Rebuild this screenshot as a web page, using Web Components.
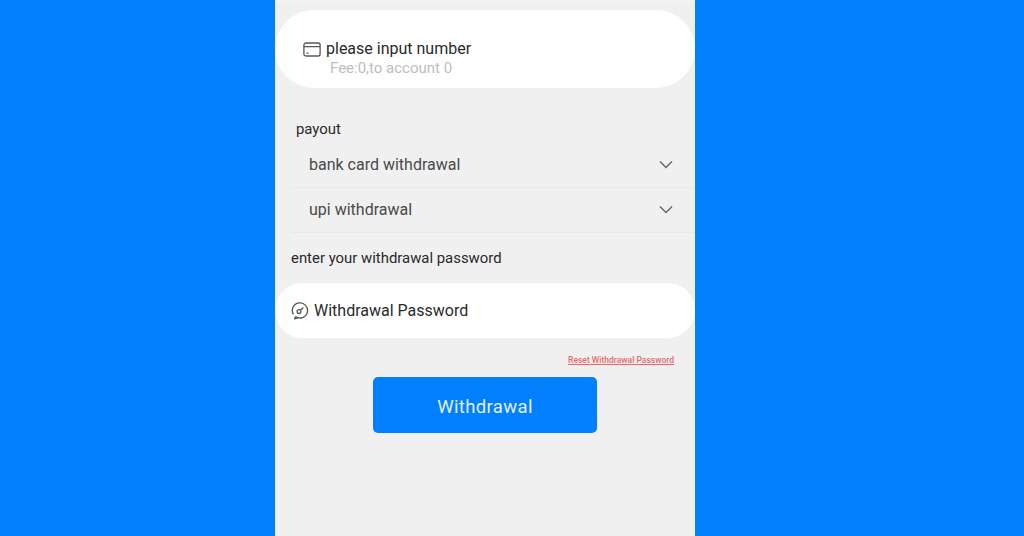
<!DOCTYPE html>
<html>
<head>
<meta charset="utf-8">
<style>
  html, body { margin: 0; padding: 0; height: 100%; }
  body { background: #0281ff; font-family: Roboto, "Liberation Sans", sans-serif; overflow: hidden; }
</style>
</head>
<body>
<withdraw-page>
  <pill-card style="--pill-height:78px;--pill-pad:31px 0 0 28px">
    <svg slot="icon" width="18" height="15" viewBox="0 0 18 15" fill="none" stroke="#555" stroke-width="1.3"><rect x=".9" y="1" width="16.2" height="13" rx="2"/><path d="M1 4.7h16M3.6 11.2h2"/></svg>
    <span>please input number</span>
    <span slot="sub">Fee:0,to account 0</span>
  </pill-card>
  <field-label style="--label-pad:32px 0 4px 21px">payout</field-label>
  <select-row>bank card withdrawal</select-row>
  <select-row>upi withdrawal</select-row>
  <field-label style="--label-pad:16px 0 0 16px">enter your withdrawal password</field-label>
  <pill-card style="--pill-height:55px;--pill-pad:19px 0 0 16px;--pill-mt:16px">
    <svg slot="icon" width="18" height="18" viewBox="0 0 18 18" fill="none" stroke="#555" stroke-width="1.3"><path d="M4.4 14.6A7.6 7.6 0 1 0 2.4 12.4"/><path d="M4.4 14.6 3.6 16.8 7 15.9" stroke-linejoin="round"/><circle cx="8" cy="9.6" r="1.9"/><path d="M9.4 8.2 12.4 5.6"/></svg>
    <span>Withdrawal Password</span>
  </pill-card>
  <reset-link>Reset Withdrawal Password</reset-link>
  <submit-button>Withdrawal</submit-button>
</withdraw-page>
<script>
class WithdrawPage extends HTMLElement {
  constructor() {
    super()
    this.attachShadow({ mode: "open" })
    this.shadowRoot.innerHTML = `
      <style>
        :host { display: grid; grid-template-columns: 275px 420px 1fr; height: 536px; }
        main {
          grid-column: 2;
          height: 536px;
          box-sizing: border-box;
          background: #f0f0f0;
          display: flex;
          flex-direction: column;
          overflow: hidden;
        }
        .top { flex: none; height: 3px; margin-bottom: 7px; background: #f3f3f3; }
      </style>
      <main><div class="top"></div><slot></slot></main>
    `
  }
}
class PillCard extends HTMLElement {
  constructor() {
    super()
    this.attachShadow({ mode: "open" })
    this.shadowRoot.innerHTML = `
      <style>
        :host {
          display: block;
          box-sizing: border-box;
          height: var(--pill-height);
          margin-top: var(--pill-mt, 0);
          padding: var(--pill-pad);
          background: #fff;
          border-radius: 39px;
          color: #2a2a2a;
          font-size: 16px;
          line-height: 16px;
        }
        .row { display: flex; align-items: center; gap: 5px; }
        ::slotted(svg) { flex: none; }
        .sub { display: block; margin: 3px 0 0 27px; font-size: 15px; line-height: 16px; color: #bdbdbd; }
      </style>
      <div class="row"><slot name="icon"></slot><slot></slot></div>
      <div class="sub"><slot name="sub"></slot></div>
    `
  }
}
class FieldLabel extends HTMLElement {
  constructor() {
    super()
    this.attachShadow({ mode: "open" })
    this.shadowRoot.innerHTML = `
      <style>
        :host {
          display: block;
          padding: var(--label-pad);
          font-size: 14.9px;
          line-height: 18px;
          color: #2a2a2a;
        }
      </style>
      <slot></slot>
    `
  }
}
class SelectRow extends HTMLElement {
  constructor() {
    super()
    this.attachShadow({ mode: "open" })
    this.shadowRoot.innerHTML = `
      <style>
        :host {
          display: flex;
          align-items: center;
          justify-content: space-between;
          box-sizing: border-box;
          height: 45.5px;
          margin-left: 16px;
          padding: 0 22px 0 18px;
          border-bottom: 1px solid #e9e9e9;
          font-size: 16px;
          color: #4a4a4a;
        }
        svg { display: block; }
      </style>
      <slot></slot>
      <svg width="14" height="9" viewBox="0 0 14 9" fill="none" stroke="#666" stroke-width="1.4"><path d="M1 1.5 7 7.5l6-6"/></svg>
    `
  }
}
class ResetLink extends HTMLElement {
  constructor() {
    super()
    this.attachShadow({ mode: "open" })
    this.shadowRoot.innerHTML = `
      <style>
        :host {
          display: block;
          margin-top: 16px;
          padding-right: 21px;
          text-align: right;
          font-size: 8.5px;
          font-weight: 500;
          line-height: 12px;
          color: #e8686e;
          text-decoration: underline;
        }
      </style>
      <slot></slot>
    `
  }
}
class SubmitButton extends HTMLElement {
  constructor() {
    super()
    this.attachShadow({ mode: "open" })
    this.shadowRoot.innerHTML = `
      <style>
        :host {
          display: flex;
          align-items: center;
          justify-content: center;
          align-self: center;
          box-sizing: border-box;
          width: 224px;
          height: 56px;
          margin-top: 11px;
          padding-top: 4px;
          border-radius: 5px;
          background: #0080ff;
          color: #e3f0ff;
          font-size: 18.5px;
          letter-spacing: .35px;
        }
      </style>
      <slot></slot>
    `
  }
}
customElements.define("withdraw-page", WithdrawPage)
customElements.define("pill-card", PillCard)
customElements.define("field-label", FieldLabel)
customElements.define("select-row", SelectRow)
customElements.define("reset-link", ResetLink)
customElements.define("submit-button", SubmitButton)
</script>
</body>
</html>
